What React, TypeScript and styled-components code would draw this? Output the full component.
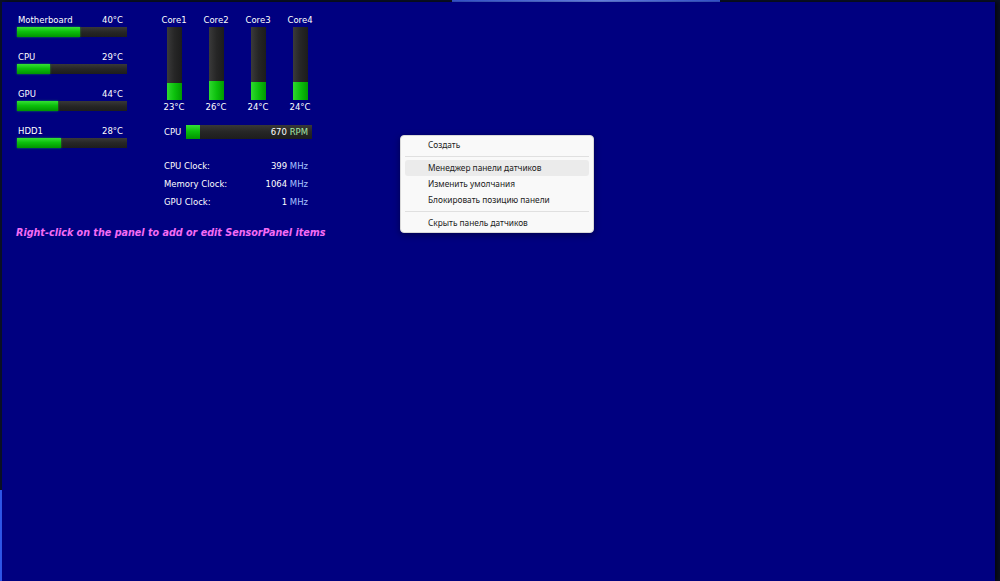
import React from "react"
import styled, { createGlobalStyle } from "styled-components"

const temps = [
  { label: "Motherboard", value: "40°C", pct: 57 },
  { label: "CPU", value: "29°C", pct: 30 },
  { label: "GPU", value: "44°C", pct: 37 },
  { label: "HDD1", value: "28°C", pct: 40 },
]

const cores = [
  { label: "Core1", value: "23°C", pct: 23 },
  { label: "Core2", value: "26°C", pct: 26 },
  { label: "Core3", value: "24°C", pct: 24 },
  { label: "Core4", value: "24°C", pct: 24 },
]

const clocks = [
  { label: "CPU Clock:", value: "399" },
  { label: "Memory Clock:", value: "1064" },
  { label: "GPU Clock:", value: "1" },
]

const menu = [
  { text: "Создать" },
  { sep: true },
  { text: "Менеджер панели датчиков", active: true },
  { text: "Изменить умолчания" },
  { text: "Блокировать позицию панели" },
  { sep: true },
  { text: "Скрыть панель датчиков" },
]

const App = (): JSX.Element => {
  return (
    <>
      <GlobalStyle />
      <Page>
        <Panel>
          <Top>
            <TempList>
              {temps.map(t => (
                <TempRow key={t.label}>
                  <RowHead>
                    <span>{t.label}</span>
                    <span>{t.value}</span>
                  </RowHead>
                  <HBar>
                    <HFill style={{ width: `${t.pct}%` }} />
                  </HBar>
                </TempRow>
              ))}
            </TempList>
            <RightBlock>
              <Cores>
                {cores.map(c => (
                  <Core key={c.label}>
                    <CoreLabel>{c.label}</CoreLabel>
                    <VBar>
                      <VFill style={{ height: `${c.pct}%` }} />
                    </VBar>
                    <CoreLabel $temp>{c.value}</CoreLabel>
                  </Core>
                ))}
              </Cores>
              <FanRow>
                <FanLabel>CPU</FanLabel>
                <FanBar>
                  <FanFill style={{ width: "11%" }} />
                  <FanValue>
                    670 <Unit $color="#a6e6a6">RPM</Unit>
                  </FanValue>
                </FanBar>
              </FanRow>
              <Clocks>
                {clocks.map(c => (
                  <ClockRow key={c.label}>
                    <span>{c.label}</span>
                    <span>
                      {c.value} <Unit $color="#a9c4ff">MHz</Unit>
                    </span>
                  </ClockRow>
                ))}
              </Clocks>
            </RightBlock>
          </Top>
          <Hint>Right-click on the panel to add or edit SensorPanel items</Hint>
        </Panel>
        <Menu>
          {menu.map((m, i) =>
            m.sep ? <Separator key={i} /> : <MenuItem key={i} $active={!!m.active}>{m.text}</MenuItem>
          )}
        </Menu>
      </Page>
    </>
  )
}

const GlobalStyle = createGlobalStyle`
  html, body {
    margin: 0;
    padding: 0;
    background: #08102a;
  }
`

const Page = styled.div`
  position: relative;
  width: 1000px;
  height: 581px;
  overflow: hidden;
  background:
    linear-gradient(90deg, transparent 452px, #3b5ee6 452px, #7391ff 600px, #3b5ee6 720px, transparent 720px) top left / 100% 2px no-repeat,
    linear-gradient(180deg, transparent 490px, #2f57ea 490px) top left / 3px 100% no-repeat,
    #0a1026;
  font-family: "DejaVu Sans", Verdana, sans-serif;
  display: flex;
`

const Panel = styled.div`
  flex: 1;
  margin: 2px 5px 0 2px;
  background: #000080;
  box-shadow: 3px 0 4px rgba(0, 0, 0, 0.6);
  padding: 11px 0 0 15px;
  color: #ffffff;
  font-size: 8.5px;
`

const Top = styled.div`
  display: flex;
`

const TempList = styled.div`
  width: 110px;
  display: flex;
  flex-direction: column;
  gap: 13px;
`

const TempRow = styled.div`
  display: flex;
  flex-direction: column;
`

const RowHead = styled.div`
  display: flex;
  justify-content: space-between;
  line-height: 12px;
  padding: 1px 4px 0 1px;
`

const HBar = styled.div`
  margin-top: 1px;
  height: 10px;
  background: linear-gradient(180deg, #383838 0%, #262626 50%, #1d1d1d 100%);
  display: flex;
`

const HFill = styled.div`
  height: 100%;
  background: linear-gradient(180deg, #35e035 0%, #0cc00c 45%, #009400 100%);
  box-shadow: 0 0 2px rgba(40, 220, 40, 0.6);
`

const RightBlock = styled.div`
  margin-left: 26px;
  display: flex;
  flex-direction: column;
`

const Cores = styled.div`
  display: grid;
  grid-template-columns: repeat(4, 42px);
`

const Core = styled.div`
  display: flex;
  flex-direction: column;
  align-items: center;
`

const CoreLabel = styled.div<{ $temp?: boolean }>`
  line-height: 12px;
  padding-top: ${props => (props.$temp ? "0" : "1px")};
  margin-top: ${props => (props.$temp ? "1px" : "0")};
`

const VBar = styled.div`
  margin-top: 1px;
  width: 15px;
  height: 73px;
  background: linear-gradient(90deg, #3a3a3a 0%, #262626 50%, #1c1c1c 100%);
  display: flex;
  flex-direction: column;
  justify-content: flex-end;
`

const VFill = styled.div`
  width: 100%;
  background: linear-gradient(90deg, #2fd82f 0%, #0cc00c 50%, #009a00 100%);
`

const FanRow = styled.div`
  margin-top: 12px;
  padding-left: 11px;
  display: flex;
  align-items: center;
`

const FanLabel = styled.span`
  width: 22px;
`

const FanBar = styled.div`
  width: 126px;
  height: 14px;
  background: linear-gradient(180deg, #383838 0%, #262626 50%, #1d1d1d 100%);
  display: flex;
  align-items: center;
`

const FanFill = styled.div`
  height: 100%;
  background: linear-gradient(180deg, #35e035 0%, #0cc00c 45%, #009400 100%);
`

const FanValue = styled.span`
  margin-left: auto;
  padding-right: 4px;
`

const Unit = styled.span<{ $color: string }>`
  color: ${props => props.$color};
`

const Clocks = styled.div`
  margin-top: 18px;
  padding-left: 11px;
  width: 144px;
  display: flex;
  flex-direction: column;
`

const ClockRow = styled.div`
  display: flex;
  justify-content: space-between;
  line-height: 18px;
`

const Hint = styled.div`
  margin: 15px 0 0 -1px;
  line-height: 14px;
  font-size: 9.6px;
  font-weight: bold;
  font-style: italic;
  color: #f46cf4;
`

const Menu = styled.div`
  position: absolute;
  left: 400px;
  top: 135px;
  width: 192px;
  padding: 1px 0 1px;
  background: #f9f9f9;
  border: 1px solid #d8d8d8;
  border-radius: 4px;
  box-shadow: 0 2px 7px rgba(0, 0, 0, 0.4);
  font-family: "Noto Sans", "Segoe UI", sans-serif;
  font-size: 8.3px;
  color: #1b1b1b;
`

const MenuItem = styled.div<{ $active: boolean }>`
  height: 16px;
  line-height: 16px;
  margin: 0 4px;
  padding-left: 23px;
  border-radius: 3px;
  background: ${props => (props.$active ? "#ebebeb" : "transparent")};
`

const Separator = styled.div`
  height: 1px;
  margin: 3px 4px;
  background: #e0e0e0;
`

export default App
